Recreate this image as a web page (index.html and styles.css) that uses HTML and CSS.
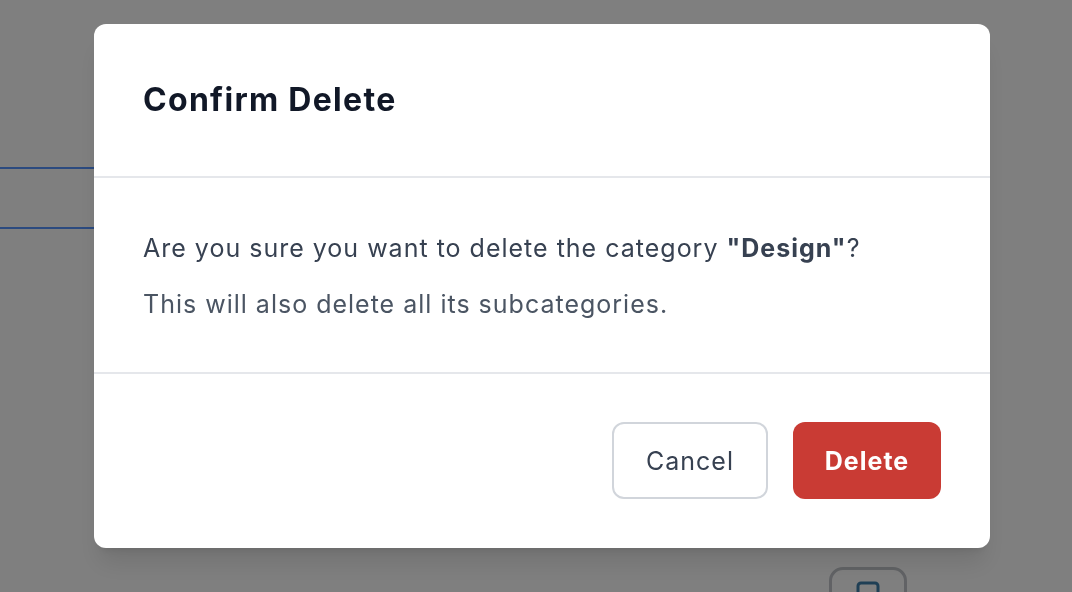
FILE: index.html
```html
<!DOCTYPE html>
<html lang="en">
<head>
<meta charset="utf-8">
<title>Confirm Delete</title>
<link rel="stylesheet" href="styles.css">
</head>
<body>
<div class="page">
  <div class="top-space"></div>
  <div class="row"></div>
  <div class="fill"></div>
  <div class="actions">
    <button class="icon-btn" aria-label="Copy">
      <svg width="28" height="28" viewBox="0 0 28 28" fill="none" stroke="#3e7eaa" stroke-width="3"><rect x="4" y="2" width="20" height="24" rx="3"/></svg>
    </button>
  </div>
</div>
<div class="overlay">
  <div class="modal">
    <div class="modal-header">
      <h2 class="modal-title">Confirm Delete</h2>
    </div>
    <div class="modal-body">
      <p class="msg">Are you sure you want to delete the category <strong>"Design"</strong>?</p>
      <p class="msg sub">This will also delete all its subcategories.</p>
    </div>
    <div class="modal-footer">
      <button class="btn btn-cancel">Cancel</button>
      <button class="btn btn-delete">Delete</button>
    </div>
  </div>
</div>
</body>
</html>
```
FILE: styles.css
```css
* { box-sizing: border-box; }
html, body { margin: 0; padding: 0; }
body {
  background: #ffffff;
  font-family: Inter, "Noto Sans", sans-serif;
  width: 1072px;
  height: 592px;
  overflow: hidden;
}
.page {
  display: flex;
  flex-direction: column;
  height: 592px;
  overflow: hidden;
}
.page > * { flex-shrink: 0; }
.top-space { height: 167px; }
.row {
  width: 640px;
  height: 62px;
  border-top: 2px solid #5694fe;
  border-bottom: 2px solid #5694fe;
}
.fill { height: 338px; }
.actions {
  display: flex;
  padding-left: 829px;
}
.icon-btn {
  width: 78px;
  height: 60px;
  border: 3px solid #c2c5ca;
  border-radius: 14px;
  background: #fff;
  display: flex;
  justify-content: center;
  padding-top: 11px;
  margin: 0;
}
.overlay {
  position: fixed;
  inset: 0;
  background: rgba(0, 0, 0, 0.5);
  padding: 24px 0 0 94px;
}
.modal {
  width: 896px;
  height: 524px;
  background: #fff;
  border-radius: 12px;
  box-shadow: 0 20px 25px -5px rgba(0,0,0,0.1), 0 8px 10px -6px rgba(0,0,0,0.1);
  display: flex;
  flex-direction: column;
}
.modal-header {
  padding: 49px 49px 0;
  height: 154px;
  border-bottom: 2px solid #e5e7eb;
}
.modal-title {
  margin: 0;
  font-size: 32px;
  line-height: 54px;
  font-weight: 700;
  letter-spacing: 1.3px;
  color: #111827;
}
.modal-body {
  padding: 49px 49px 0;
  height: 196px;
  border-bottom: 2px solid #e5e7eb;
}
.msg {
  margin: 0;
  font-size: 25px;
  line-height: 42px;
  letter-spacing: 1px;
  color: #374151;
}
.msg strong { font-weight: 700; }
.msg.sub {
  margin-top: 14px;
  color: #4b5563;
}
.modal-footer {
  flex: 1;
  display: flex;
  justify-content: flex-end;
  align-items: flex-start;
  gap: 25px;
  padding: 48px 49px 0;
}
.btn {
  font-family: Inter, "Noto Sans", sans-serif;
  font-size: 25px;
  letter-spacing: 1px;
  height: 77px;
  border-radius: 12px;
  margin: 0;
  padding: 0;
  cursor: pointer;
}
.btn-cancel {
  width: 156px;
  background: #fff;
  border: 2px solid #d1d5db;
  color: #374151;
}
.btn-delete {
  width: 148px;
  background: #c93b34;
  border: none;
  color: #fff;
  font-weight: 700;
}
```
